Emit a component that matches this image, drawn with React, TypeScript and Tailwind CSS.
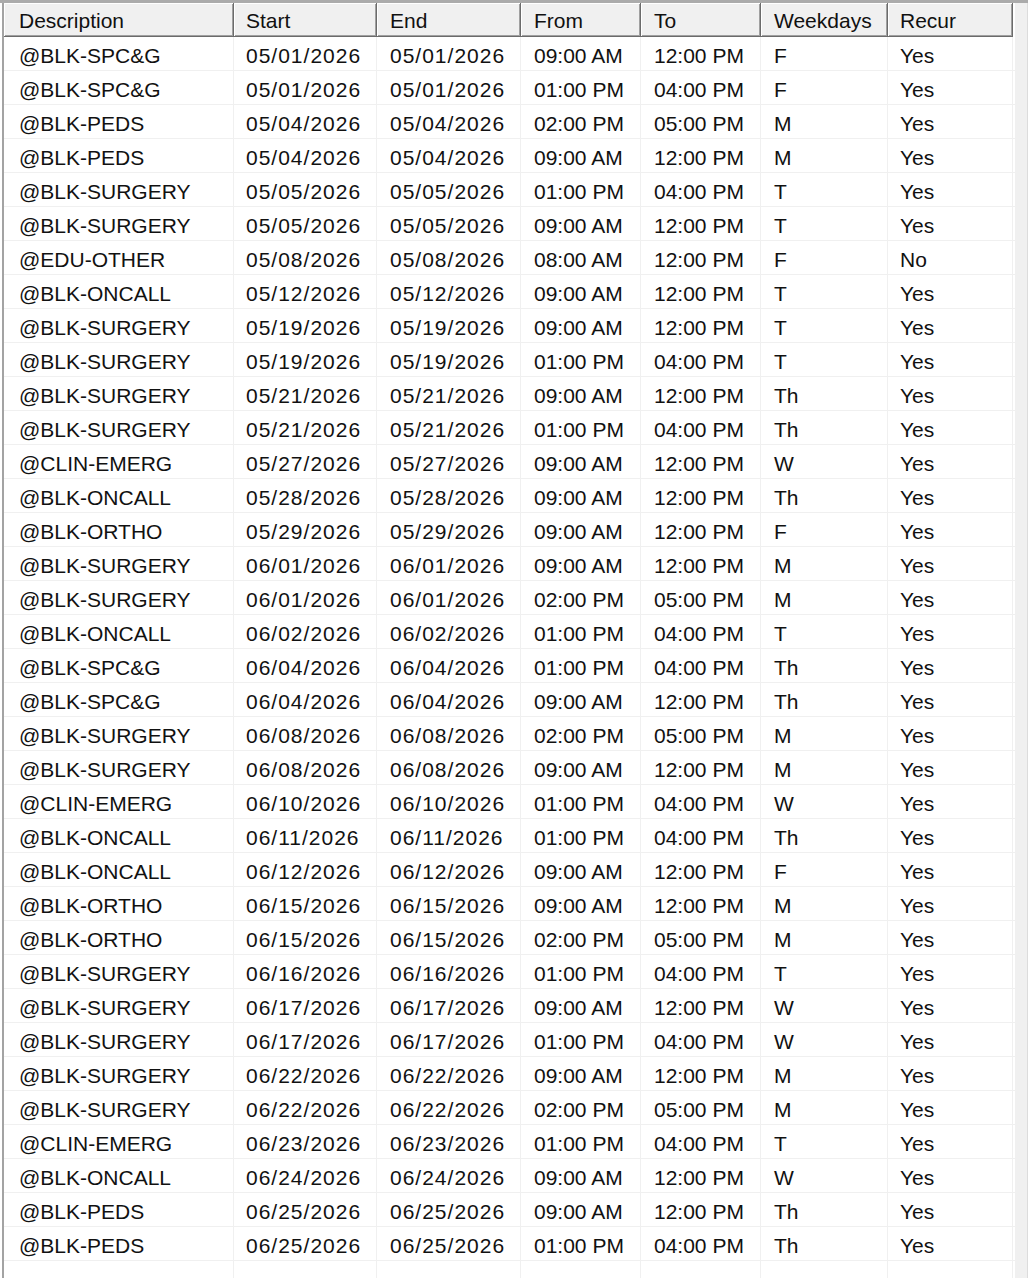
import React from 'react';

// Column layout of the list view (widths in px)
const COLUMNS = [
  { key: 'desc', label: 'Description', width: 'w-[230px]', pad: 'pl-[15px]', cell: '' },
  { key: 'start', label: 'Start', width: 'w-[143px]', pad: 'pl-[12px]', cell: 'tracking-[1px]' },
  { key: 'end', label: 'End', width: 'w-[144px]', pad: 'pl-[13px]', cell: 'tracking-[1px]' },
  { key: 'from', label: 'From', width: 'w-[120px]', pad: 'pl-[13px]', cell: '' },
  { key: 'to', label: 'To', width: 'w-[120px]', pad: 'pl-[13px]', cell: '' },
  { key: 'days', label: 'Weekdays', width: 'w-[127px]', pad: 'pl-[13px]', cell: '' },
  { key: 'recur', label: 'Recur', width: 'w-[125px]', pad: 'pl-[12px]', cell: '' },
];

const ROWS: string[][] = [
  ['@BLK-SPC&G', '05/01/2026', '05/01/2026', '09:00 AM', '12:00 PM', 'F', 'Yes'],
  ['@BLK-SPC&G', '05/01/2026', '05/01/2026', '01:00 PM', '04:00 PM', 'F', 'Yes'],
  ['@BLK-PEDS', '05/04/2026', '05/04/2026', '02:00 PM', '05:00 PM', 'M', 'Yes'],
  ['@BLK-PEDS', '05/04/2026', '05/04/2026', '09:00 AM', '12:00 PM', 'M', 'Yes'],
  ['@BLK-SURGERY', '05/05/2026', '05/05/2026', '01:00 PM', '04:00 PM', 'T', 'Yes'],
  ['@BLK-SURGERY', '05/05/2026', '05/05/2026', '09:00 AM', '12:00 PM', 'T', 'Yes'],
  ['@EDU-OTHER', '05/08/2026', '05/08/2026', '08:00 AM', '12:00 PM', 'F', 'No'],
  ['@BLK-ONCALL', '05/12/2026', '05/12/2026', '09:00 AM', '12:00 PM', 'T', 'Yes'],
  ['@BLK-SURGERY', '05/19/2026', '05/19/2026', '09:00 AM', '12:00 PM', 'T', 'Yes'],
  ['@BLK-SURGERY', '05/19/2026', '05/19/2026', '01:00 PM', '04:00 PM', 'T', 'Yes'],
  ['@BLK-SURGERY', '05/21/2026', '05/21/2026', '09:00 AM', '12:00 PM', 'Th', 'Yes'],
  ['@BLK-SURGERY', '05/21/2026', '05/21/2026', '01:00 PM', '04:00 PM', 'Th', 'Yes'],
  ['@CLIN-EMERG', '05/27/2026', '05/27/2026', '09:00 AM', '12:00 PM', 'W', 'Yes'],
  ['@BLK-ONCALL', '05/28/2026', '05/28/2026', '09:00 AM', '12:00 PM', 'Th', 'Yes'],
  ['@BLK-ORTHO', '05/29/2026', '05/29/2026', '09:00 AM', '12:00 PM', 'F', 'Yes'],
  ['@BLK-SURGERY', '06/01/2026', '06/01/2026', '09:00 AM', '12:00 PM', 'M', 'Yes'],
  ['@BLK-SURGERY', '06/01/2026', '06/01/2026', '02:00 PM', '05:00 PM', 'M', 'Yes'],
  ['@BLK-ONCALL', '06/02/2026', '06/02/2026', '01:00 PM', '04:00 PM', 'T', 'Yes'],
  ['@BLK-SPC&G', '06/04/2026', '06/04/2026', '01:00 PM', '04:00 PM', 'Th', 'Yes'],
  ['@BLK-SPC&G', '06/04/2026', '06/04/2026', '09:00 AM', '12:00 PM', 'Th', 'Yes'],
  ['@BLK-SURGERY', '06/08/2026', '06/08/2026', '02:00 PM', '05:00 PM', 'M', 'Yes'],
  ['@BLK-SURGERY', '06/08/2026', '06/08/2026', '09:00 AM', '12:00 PM', 'M', 'Yes'],
  ['@CLIN-EMERG', '06/10/2026', '06/10/2026', '01:00 PM', '04:00 PM', 'W', 'Yes'],
  ['@BLK-ONCALL', '06/11/2026', '06/11/2026', '01:00 PM', '04:00 PM', 'Th', 'Yes'],
  ['@BLK-ONCALL', '06/12/2026', '06/12/2026', '09:00 AM', '12:00 PM', 'F', 'Yes'],
  ['@BLK-ORTHO', '06/15/2026', '06/15/2026', '09:00 AM', '12:00 PM', 'M', 'Yes'],
  ['@BLK-ORTHO', '06/15/2026', '06/15/2026', '02:00 PM', '05:00 PM', 'M', 'Yes'],
  ['@BLK-SURGERY', '06/16/2026', '06/16/2026', '01:00 PM', '04:00 PM', 'T', 'Yes'],
  ['@BLK-SURGERY', '06/17/2026', '06/17/2026', '09:00 AM', '12:00 PM', 'W', 'Yes'],
  ['@BLK-SURGERY', '06/17/2026', '06/17/2026', '01:00 PM', '04:00 PM', 'W', 'Yes'],
  ['@BLK-SURGERY', '06/22/2026', '06/22/2026', '09:00 AM', '12:00 PM', 'M', 'Yes'],
  ['@BLK-SURGERY', '06/22/2026', '06/22/2026', '02:00 PM', '05:00 PM', 'M', 'Yes'],
  ['@CLIN-EMERG', '06/23/2026', '06/23/2026', '01:00 PM', '04:00 PM', 'T', 'Yes'],
  ['@BLK-ONCALL', '06/24/2026', '06/24/2026', '09:00 AM', '12:00 PM', 'W', 'Yes'],
  ['@BLK-PEDS', '06/25/2026', '06/25/2026', '09:00 AM', '12:00 PM', 'Th', 'Yes'],
  ['@BLK-PEDS', '06/25/2026', '06/25/2026', '01:00 PM', '04:00 PM', 'Th', 'Yes'],
];

export default function App() {
  return (
    <div className="w-[1028px] h-[1278px] overflow-hidden bg-white flex flex-col font-['Liberation_Sans',Arial,sans-serif] text-[21px] text-[#111] leading-none">
      {/* top frame edge */}
      <div className="h-[3px] bg-[#ababab] shrink-0" />
      <div className="flex flex-1 min-h-0">
        {/* left frame edge */}
        <div className="w-[2px] bg-white shrink-0" />
        <div className="w-[2px] bg-[#a3a3a3] shrink-0" />

        {/* list view */}
        <div className="w-[1011px] flex flex-col shrink-0">
          <div className="flex h-[34px] shrink-0">
            {COLUMNS.map((col) => (
              <div
                key={col.key}
                className={`${col.width} ${col.pad} pt-[2px] h-full flex items-center bg-[#f0f0f0] border-r border-b border-[#6b6b6b] shadow-[inset_1px_1px_0_#ffffff,inset_-1px_-1px_0_#a0a0a0] shrink-0`}
              >
                {col.label}
              </div>
            ))}
          </div>

          {ROWS.map((row, i) => (
            <div key={i} className="flex h-[34px] shrink-0 border-b border-[#f0f0f0]">
              {row.map((cell, j) => (
                <div
                  key={j}
                  className={`${COLUMNS[j].width} ${COLUMNS[j].pad} ${COLUMNS[j].cell} pt-[3px] h-full flex items-center border-r border-[#f0f0f0] shrink-0 whitespace-nowrap`}
                >
                  {cell}
                </div>
              ))}
            </div>
          ))}

          {/* empty space below the last row, gridlines continue */}
          <div className="flex flex-1">
            {COLUMNS.map((col) => (
              <div key={col.key} className={`${col.width} h-full border-r border-[#f0f0f0] shrink-0`} />
            ))}
          </div>
        </div>

        {/* scrollbar track */}
        <div className="flex-1 bg-[#f0f0f0] border-r border-[#dcdcdc]" />
      </div>
    </div>
  );
}
